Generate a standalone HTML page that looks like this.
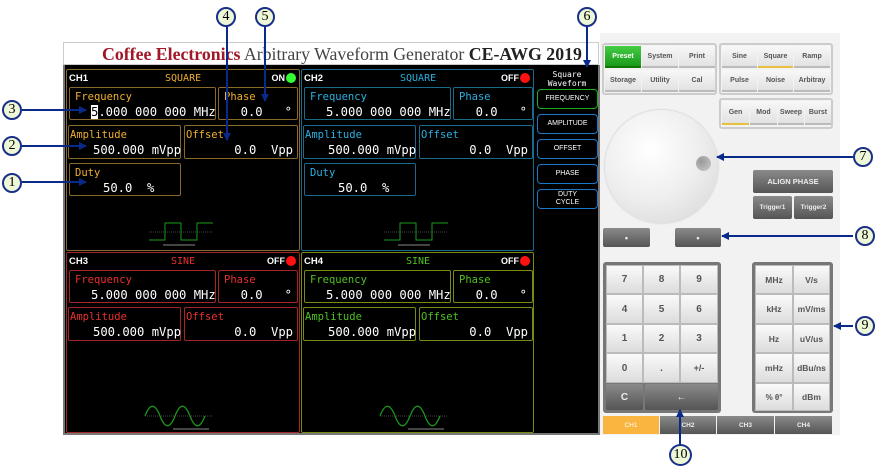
<!DOCTYPE html>
<html><head><meta charset="utf-8"><style>
*{margin:0;padding:0;box-sizing:border-box}
body{width:885px;height:471px;background:#fff;position:relative;overflow:hidden;font-family:"Liberation Sans",sans-serif}
.a{position:absolute}
.m{font-family:"DejaVu Sans Mono","Liberation Mono",monospace}
.box{position:absolute;border:1.5px solid;border-radius:2px}
.lbl{position:absolute;left:5px;top:3px;font-size:10.5px}
.val{position:absolute;top:17px;font-size:12.2px;color:#fff;white-space:pre}
.hd{position:absolute;top:3px;font-size:9.5px;font-weight:bold}
.btn{position:absolute;background:linear-gradient(#f8f8f8,#e2e2e2);border-bottom:2px solid #bbb;font-size:7px;font-weight:bold;color:#555;display:flex;align-items:center;justify-content:center}
.dbtn{position:absolute;background:linear-gradient(#8a8a8a,#555);color:#eee;font-size:7px;font-weight:bold;display:flex;align-items:center;justify-content:center;border-radius:2px}
.nb{position:absolute;background:linear-gradient(#fafafa,#dcdcdc);border:1px solid #bbb;font-size:10px;font-weight:bold;color:#555;display:flex;align-items:center;justify-content:center}
.grp{position:absolute;border:2px solid #ccc;border-radius:3px;background:#f2f2f2}
.sm{position:absolute;left:537px;width:61px;height:20px;border:1.5px solid #1a78c8;border-radius:4px;color:#fff;font-size:7px;display:flex;align-items:center;justify-content:center;text-align:center;line-height:8px}
.c{position:absolute;width:20px;height:20px;border:2px solid #1a2f8a;border-radius:50%;background:#eef8d6;font-family:"Liberation Serif",serif;font-size:14px;display:flex;align-items:center;justify-content:center;color:#000}
</style></head><body>

<div class="a" style="left:63px;top:42px;width:536px;height:23px;border:1px solid #ccc;background:#fff;font-family:'Liberation Serif',serif;font-size:17.8px;line-height:22px;padding-left:38px;white-space:nowrap;overflow:hidden">
<b style="color:#a01828">Coffee Electronics</b> <span style="color:#444"> Arbitrary Waveform Generator </span><b style="color:#222">CE-AWG 2019</b></div>

<div class="a" style="left:63px;top:65px;width:537px;height:370px;background:#000;border:2px solid #777;border-top:none"></div>

<div class="a" style="left:600px;top:33px;width:240px;height:402px;background:#f2f2f2"></div>

<!-- CH1 -->
<div class="box" style="left:66px;top:69px;width:234px;height:182px;border-color:#8a6a2a">
 <div class="hd" style="left:2px;color:#fff">CH1</div>
 <div class="hd m" style="left:98px;color:#f0b030;font-weight:normal;font-size:10px">SQUARE</div>
 <div class="hd" style="right:14px;color:#fff;font-size:9px">ON</div>
 <div class="a" style="right:3px;top:3px;width:10px;height:10px;border-radius:50%;background:#3f3"></div>
 <div class="box m" style="left:2px;top:17px;width:147px;height:33px;border-color:#8a6a2a"><div class="lbl" style="color:#f0b030">Frequency</div><div class="val" style="left:21px"><span style="background:#fff;color:#000">5</span>.000 000 000 MHz</div></div>
 <div class="box m" style="left:151px;top:17px;width:80px;height:33px;border-color:#8a6a2a"><div class="lbl" style="color:#f0b030">Phase</div><div class="val" style="right:5px">0.0   °</div></div>
 <div class="box m" style="left:1px;top:55px;width:113px;height:34px;border-color:#8a6a2a"><div class="lbl" style="left:1px;color:#f0b030">Amplitude</div><div class="val" style="left:24px">500.000 mVpp</div></div>
 <div class="box m" style="left:117px;top:55px;width:114px;height:34px;border-color:#8a6a2a"><div class="lbl" style="left:1px;color:#f0b030">Offset</div><div class="val" style="right:4px">0.0  Vpp</div></div>
 <div class="box m" style="left:2px;top:93px;width:112px;height:33px;border-color:#8a6a2a"><div class="lbl" style="color:#f0b030">Duty</div><div class="val" style="left:33px">50.0  %</div></div>
 <svg class="a" style="left:80px;top:150px" width="70" height="30"><path d="M2 20H18V3H34V20H50V3H66" stroke="#1a9a1a" fill="none"/><path d="M2 12H66" stroke="#444" stroke-dasharray="1 1"/><path d="M16 25H48" stroke="#888"/></svg>
</div>

<!-- CH2 -->
<div class="box" style="left:301px;top:69px;width:233px;height:182px;border-color:#1a6a8a">
 <div class="hd" style="left:2px;color:#fff">CH2</div>
 <div class="hd m" style="left:98px;color:#2ab0e0;font-weight:normal;font-size:10px">SQUARE</div>
 <div class="hd" style="right:14px;color:#fff;font-size:9px">OFF</div>
 <div class="a" style="right:3px;top:3px;width:10px;height:10px;border-radius:50%;background:#f11"></div>
 <div class="box m" style="left:2px;top:17px;width:147px;height:33px;border-color:#1a6a8a"><div class="lbl" style="color:#2ab0e0">Frequency</div><div class="val" style="left:21px">5.000 000 000 MHz</div></div>
 <div class="box m" style="left:151px;top:17px;width:80px;height:33px;border-color:#1a6a8a"><div class="lbl" style="color:#2ab0e0">Phase</div><div class="val" style="right:5px">0.0   °</div></div>
 <div class="box m" style="left:1px;top:55px;width:113px;height:34px;border-color:#1a6a8a"><div class="lbl" style="left:1px;color:#2ab0e0">Amplitude</div><div class="val" style="left:24px">500.000 mVpp</div></div>
 <div class="box m" style="left:117px;top:55px;width:114px;height:34px;border-color:#1a6a8a"><div class="lbl" style="left:1px;color:#2ab0e0">Offset</div><div class="val" style="right:4px">0.0  Vpp</div></div>
 <div class="box m" style="left:2px;top:93px;width:112px;height:33px;border-color:#1a6a8a"><div class="lbl" style="color:#2ab0e0">Duty</div><div class="val" style="left:33px">50.0  %</div></div>
 <svg class="a" style="left:80px;top:150px" width="70" height="30"><path d="M2 20H18V3H34V20H50V3H66" stroke="#1a9a1a" fill="none"/><path d="M2 12H66" stroke="#444" stroke-dasharray="1 1"/><path d="M16 25H48" stroke="#888"/></svg>
</div>

<!-- CH3 -->
<div class="box" style="left:66px;top:252px;width:234px;height:181px;border-color:#a02828">
 <div class="hd" style="left:2px;color:#fff">CH3</div>
 <div class="hd m" style="left:104px;color:#e83030;font-weight:normal;font-size:10px">SINE</div>
 <div class="hd" style="right:14px;color:#fff;font-size:9px">OFF</div>
 <div class="a" style="right:3px;top:3px;width:10px;height:10px;border-radius:50%;background:#f11"></div>
 <div class="box m" style="left:2px;top:17px;width:147px;height:33px;border-color:#a02828"><div class="lbl" style="color:#e83030">Frequency</div><div class="val" style="left:21px">5.000 000 000 MHz</div></div>
 <div class="box m" style="left:151px;top:17px;width:80px;height:33px;border-color:#a02828"><div class="lbl" style="color:#e83030">Phase</div><div class="val" style="right:5px">0.0   °</div></div>
 <div class="box m" style="left:1px;top:54px;width:113px;height:34px;border-color:#a02828"><div class="lbl" style="left:1px;color:#e83030">Amplitude</div><div class="val" style="left:24px">500.000 mVpp</div></div>
 <div class="box m" style="left:117px;top:54px;width:114px;height:34px;border-color:#a02828"><div class="lbl" style="left:1px;color:#e83030">Offset</div><div class="val" style="right:4px">0.0  Vpp</div></div>
 <svg class="a" style="left:76px;top:150px" width="80" height="30"><path d="M2 13C7 0 12 0 17 13S27 26 32 13S42 0 47 13S57 26 62 13" stroke="#1a9a1a" fill="none" stroke-width="1.3"/><path d="M2 13H70" stroke="#444" stroke-dasharray="1 1"/><path d="M30 26H66" stroke="#888"/></svg>
</div>

<!-- CH4 -->
<div class="box" style="left:301px;top:252px;width:233px;height:181px;border-color:#7a8a10">
 <div class="hd" style="left:2px;color:#fff">CH4</div>
 <div class="hd m" style="left:104px;color:#50c020;font-weight:normal;font-size:10px">SINE</div>
 <div class="hd" style="right:14px;color:#fff;font-size:9px">OFF</div>
 <div class="a" style="right:3px;top:3px;width:10px;height:10px;border-radius:50%;background:#f11"></div>
 <div class="box m" style="left:2px;top:17px;width:147px;height:33px;border-color:#7a8a10"><div class="lbl" style="color:#50c020">Frequency</div><div class="val" style="left:21px">5.000 000 000 MHz</div></div>
 <div class="box m" style="left:151px;top:17px;width:80px;height:33px;border-color:#7a8a10"><div class="lbl" style="color:#50c020">Phase</div><div class="val" style="right:5px">0.0   °</div></div>
 <div class="box m" style="left:1px;top:54px;width:113px;height:34px;border-color:#7a8a10"><div class="lbl" style="left:1px;color:#50c020">Amplitude</div><div class="val" style="left:24px">500.000 mVpp</div></div>
 <div class="box m" style="left:117px;top:54px;width:114px;height:34px;border-color:#7a8a10"><div class="lbl" style="left:1px;color:#50c020">Offset</div><div class="val" style="right:4px">0.0  Vpp</div></div>
 <svg class="a" style="left:76px;top:150px" width="80" height="30"><path d="M2 13C7 0 12 0 17 13S27 26 32 13S42 0 47 13S57 26 62 13" stroke="#1a9a1a" fill="none" stroke-width="1.3"/><path d="M2 13H70" stroke="#444" stroke-dasharray="1 1"/><path d="M30 26H66" stroke="#888"/></svg>
</div>

<div class="a m" style="left:535px;top:70px;width:64px;text-align:center;color:#fff;font-size:8px;line-height:9px">Square<br>Waveform</div>
<div class="sm" style="top:89px;border-color:#1ab01a">FREQUENCY</div>
<div class="sm" style="top:114px">AMPLITUDE</div>
<div class="sm" style="top:139px">OFFSET</div>
<div class="sm" style="top:164px">PHASE</div>
<div class="sm" style="top:189px">DUTY<br>CYCLE</div>

<div class="grp" style="left:602px;top:43px;width:115px;height:52px"></div>
<div class="btn" style="left:605px;top:46px;width:36px;height:22px;background:linear-gradient(#4c4,#1a9a1a);color:#fff;border-bottom-color:#170">Preset</div>
<div class="btn" style="left:642px;top:46px;width:36px;height:22px">System</div>
<div class="btn" style="left:679px;top:46px;width:36px;height:22px">Print</div>
<div class="btn" style="left:605px;top:70px;width:36px;height:22px">Storage</div>
<div class="btn" style="left:642px;top:70px;width:36px;height:22px">Utility</div>
<div class="btn" style="left:679px;top:70px;width:36px;height:22px">Cal</div>

<div class="grp" style="left:719px;top:43px;width:114px;height:52px"></div>
<div class="btn" style="left:722px;top:46px;width:35px;height:22px">Sine</div>
<div class="btn" style="left:758px;top:46px;width:35px;height:22px;border-bottom-color:#e8c040">Square</div>
<div class="btn" style="left:794px;top:46px;width:36px;height:22px">Ramp</div>
<div class="btn" style="left:722px;top:70px;width:35px;height:22px">Pulse</div>
<div class="btn" style="left:758px;top:70px;width:35px;height:22px">Noise</div>
<div class="btn" style="left:794px;top:70px;width:36px;height:22px">Arbitray</div>

<div class="grp" style="left:719px;top:98px;width:114px;height:31px"></div>
<div class="btn" style="left:722px;top:101px;width:27px;height:24px;border-bottom-color:#e8c040">Gen</div>
<div class="btn" style="left:750px;top:101px;width:27px;height:24px">Mod</div>
<div class="btn" style="left:778px;top:101px;width:26px;height:24px">Sweep</div>
<div class="btn" style="left:805px;top:101px;width:26px;height:24px">Burst</div>

<div class="a" style="left:605px;top:110px;width:113px;height:113px;border-radius:50%;background:radial-gradient(circle at 40% 35%,#fff 0%,#eee 50%,#d4d4d4 100%);box-shadow:0 0 2px #bbb"></div>
<div class="a" style="left:696px;top:156px;width:15px;height:15px;border-radius:50%;background:radial-gradient(circle at 35% 35%,#999,#ccc)"></div>

<div class="dbtn" style="left:753px;top:170px;width:80px;height:23px;font-size:7.5px">ALIGN PHASE</div>
<div class="dbtn" style="left:753px;top:196px;width:39px;height:23px;font-size:6.5px">Trigger1</div>
<div class="dbtn" style="left:794px;top:196px;width:39px;height:23px;font-size:6.5px">Trigger2</div>

<div class="dbtn" style="left:603px;top:228px;width:47px;height:19px;font-size:9px">•</div>
<div class="dbtn" style="left:675px;top:228px;width:46px;height:19px;font-size:9px">•</div>

<div class="a" style="left:603px;top:262px;width:118px;height:151px;background:#777;border-radius:3px"></div>
<div class="nb" style="left:606px;top:265px;width:37px;height:29px">7</div>
<div class="nb" style="left:643px;top:265px;width:37px;height:29px">8</div>
<div class="nb" style="left:680px;top:265px;width:38px;height:29px">9</div>
<div class="nb" style="left:606px;top:294px;width:37px;height:30px">4</div>
<div class="nb" style="left:643px;top:294px;width:37px;height:30px">5</div>
<div class="nb" style="left:680px;top:294px;width:38px;height:30px">6</div>
<div class="nb" style="left:606px;top:324px;width:37px;height:29px">1</div>
<div class="nb" style="left:643px;top:324px;width:37px;height:29px">2</div>
<div class="nb" style="left:680px;top:324px;width:38px;height:29px">3</div>
<div class="nb" style="left:606px;top:353px;width:37px;height:30px">0</div>
<div class="nb" style="left:643px;top:353px;width:37px;height:30px">.</div>
<div class="nb" style="left:680px;top:353px;width:38px;height:30px;font-size:9px">+/-</div>
<div class="dbtn" style="left:606px;top:384px;width:37px;height:26px;font-size:10px">C</div>
<div class="dbtn" style="left:645px;top:384px;width:73px;height:26px;font-size:10px">←</div>

<div class="a" style="left:752px;top:262px;width:81px;height:151px;background:#777;border-radius:3px"></div>
<div class="nb" style="left:755px;top:265px;width:38px;height:29px;font-size:8.5px">MHz</div>
<div class="nb" style="left:793px;top:265px;width:37px;height:29px;font-size:8.5px">V/s</div>
<div class="nb" style="left:755px;top:294px;width:38px;height:30px;font-size:8.5px">kHz</div>
<div class="nb" style="left:793px;top:294px;width:37px;height:30px;font-size:8.5px">mV/ms</div>
<div class="nb" style="left:755px;top:324px;width:38px;height:29px;font-size:8.5px">Hz</div>
<div class="nb" style="left:793px;top:324px;width:37px;height:29px;font-size:8.5px">uV/us</div>
<div class="nb" style="left:755px;top:353px;width:38px;height:30px;font-size:8.5px">mHz</div>
<div class="nb" style="left:793px;top:353px;width:37px;height:30px;font-size:8.5px">dBu/ns</div>
<div class="nb" style="left:755px;top:383px;width:38px;height:28px;font-size:8px">% θ°</div>
<div class="nb" style="left:793px;top:383px;width:37px;height:28px;font-size:8.5px">dBm</div>

<div class="a" style="left:603px;top:416px;width:56px;height:18px;background:#f9b53f;color:#fff;font-size:6.5px;display:flex;align-items:center;justify-content:center">CH1</div>
<div class="dbtn" style="left:660px;top:416px;width:56px;height:18px;font-size:6.5px;border-radius:0">CH2</div>
<div class="dbtn" style="left:717px;top:416px;width:57px;height:18px;font-size:6.5px;border-radius:0">CH3</div>
<div class="dbtn" style="left:775px;top:416px;width:57px;height:18px;font-size:6.5px;border-radius:0">CH4</div>

<svg class="a" style="left:0;top:0" width="885" height="471">
<defs><marker id="ah" markerWidth="8" markerHeight="8" refX="7" refY="4" orient="auto" markerUnits="userSpaceOnUse"><path d="M0 0L8 4L0 8Z" fill="#0a2a8a"/></marker></defs>
<g stroke="#0a2a8a" stroke-width="2" fill="none" marker-end="url(#ah)">
<path d="M22 110H86"/><path d="M22 146H86"/><path d="M22 182H86"/>
<path d="M227 26V140"/><path d="M265 26V101"/><path d="M587 26V67"/>
<path d="M853 157H717"/><path d="M853 236H722"/><path d="M853 326H834"/><path d="M680 445V410"/>
</g></svg>
<div class="c" style="left:2px;top:100px">3</div>
<div class="c" style="left:2px;top:136px">2</div>
<div class="c" style="left:2px;top:173px">1</div>
<div class="c" style="left:216px;top:7px">4</div>
<div class="c" style="left:255px;top:7px">5</div>
<div class="c" style="left:577px;top:7px">6</div>
<div class="c" style="left:853px;top:147px">7</div>
<div class="c" style="left:855px;top:226px">8</div>
<div class="c" style="left:855px;top:316px">9</div>
<div class="c" style="left:669px;top:444px;width:23px;height:22px">10</div>
</body></html>
